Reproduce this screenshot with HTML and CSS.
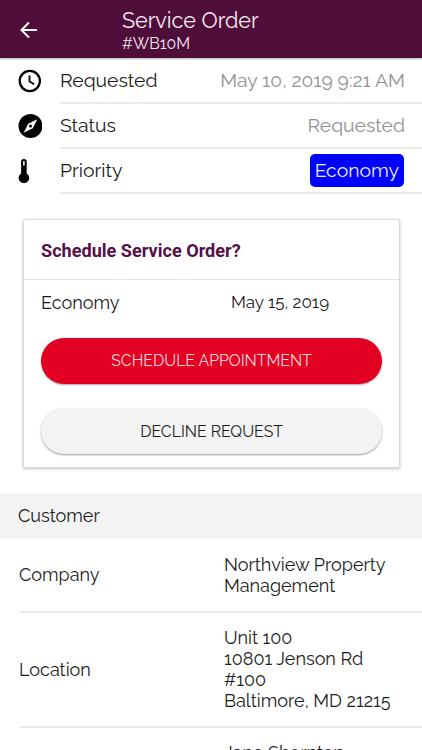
FILE: index.html
```html
<!DOCTYPE html>
<html lang="en">
<head>
<meta charset="utf-8">
<title>Service Order</title>
<link rel="stylesheet" href="styles.css">
</head>
<body>
<header class="topbar">
  <svg class="back" viewBox="0 0 24 24" width="24" height="24"><path d="M20 12H5M12 4.500L4.500 12l7.500 7.500" fill="none" stroke="#fff" stroke-width="2"/></svg>
  <div class="titles">
    <h1 class="title">Service Order</h1>
    <p class="number">#WB10M</p>
  </div>
</header>
<main>
  <ul class="facts">
    <li class="fact">
      <svg class="icon" viewBox="0 0 24 24" width="24" height="24"><circle cx="11.800" cy="12" r="10.100" fill="none" stroke="#000" stroke-width="2.200"/><path d="M11.500 6.500v6l4.700 2.800" fill="none" stroke="#000" stroke-width="1.800"/></svg>
      <div class="fact-body"><span>Requested</span><span class="muted date">May 10, 2019 9:21 AM</span></div>
    </li>
    <li class="fact">
      <svg class="icon" viewBox="0 0 24 24" width="24" height="24"><circle cx="12.500" cy="12" r="12"/><path d="M19.300 5.300L14.800 14.200l-9.200 4.500L10.200 9.800z" fill="#fff"/><circle cx="12.500" cy="12" r="1.500"/></svg>
      <div class="fact-body"><span>Status</span><span class="muted">Requested</span></div>
    </li>
    <li class="fact">
      <svg class="icon" viewBox="0 0 24 24" width="24" height="24"><path d="M3.100 2.800a2.800 2.800 0 0 1 5.600 0v11.600a5.300 5.300 0 1 1-5.600 0z"/><path d="M5.900 2v4.500" stroke="#fff" stroke-width="1.500"/></svg>
      <div class="fact-body"><span>Priority</span><span class="badge">Economy</span></div>
    </li>
  </ul>
  <section class="card">
    <h2 class="card-title">Schedule Service Order?</h2>
    <div class="card-row"><span class="card-label">Economy</span><span class="card-date">May 15, 2019</span></div>
    <button class="btn btn-primary">SCHEDULE APPOINTMENT</button>
    <button class="btn btn-plain">DECLINE REQUEST</button>
  </section>
  <h2 class="section">Customer</h2>
  <dl class="details">
    <div class="detail company"><dt>Company</dt><dd>Northview Property<br>Management</dd></div>
    <div class="detail location"><dt>Location</dt><dd>Unit 100<br>10801 Jenson Rd<br>#100<br>Baltimore, MD 21215</dd></div>
    <div class="detail contact"><dt></dt><dd>Jane Shornton</dd></div>
  </dl>
</main>
</body>
</html>
```
FILE: styles.css
```css
* { box-sizing: border-box; margin: 0; padding: 0; }
html, body { height: 750px; overflow: hidden; }
body { width: 422px; background: #fff; color: #1c1c1c; font: 400 18px/21px Raleway, Lato, sans-serif; }
.topbar { height: 58px; display: flex; background: #4f0d3a; color: #f5e9f1; box-shadow: 0 1px 2px rgba(0,0,0,.3); }
.back { margin: 18px 0 0 16.500px; }
.titles { margin: 8px 0 0 81.500px; }
.title { font-weight: 400; font-size: 21.600px; line-height: 26px; }
.number { font-size: 15.800px; line-height: 20px; }
.facts { list-style: none; padding-top: 1px; }
.fact { display: flex; height: 45px; align-items: center; padding-left: 18px; }
.icon { margin-top: -2px; }
.fact-body { flex: 1; height: 45px; margin-left: 18px; padding-right: 17px; display: flex; align-items: center; justify-content: space-between; border-bottom: 2px solid #ebebeb; font-size: 19.350px; }
.muted { color: #929292; }
.date { font-size: 19.250px; }
.badge { height: 33px; margin-right: 1px; padding: 0 5px; border-radius: 5px; background: #00f; color: #eee; line-height: 33px; }
.card { margin: 25px 22px 0 23px; width: 377px; height: 248.500px; border: 1px solid #d9d9d9; border-radius: 2px; box-shadow: 0 1px 3px rgba(0,0,0,.25); display: flex; flex-direction: column; }
.card-title { height: 60px; border-bottom: 1px solid #e4e4e4; padding-left: 17px; font: 700 18.100px/61px Roboto, sans-serif; color: #551048; }
.card-row { height: 57.500px; padding: 12px 17px 0; display: flex; }
.card-label { width: 190px; }
.card-date { font-size: 17px; }
.btn { width: 341px; height: 46px; margin-left: 17px; flex: none; border: 0; border-radius: 23px; font: 400 15.800px/46px Raleway, Lato, sans-serif; }
.btn-primary { background: #e30022; color: #fbd9df; box-shadow: 0 1px 2px rgba(0,0,0,.35); }
.btn-plain { margin-top: 24.500px; padding-top: 1px; background: #f3f3f3; color: #1c1c1c; box-shadow: 0 1px 2px rgba(0,0,0,.4); }
.section { height: 46px; margin-top: 25.500px; padding-left: 18px; background: #f3f3f3; font: inherit; line-height: 46px; }
.detail { margin-left: 19px; display: flex; align-items: center; border-bottom: 2px solid #ebebeb; }
.detail dt { width: 205px; flex: none; }
.detail dd { font-size: 18.050px; line-height: 21px; }
.company { height: 74px; padding-bottom: 1px; }
.location { height: 115px; padding-bottom: 1px; }
.contact { height: 22px; align-items: flex-start; padding-top: 14px; border: 0; overflow: hidden; }
```
